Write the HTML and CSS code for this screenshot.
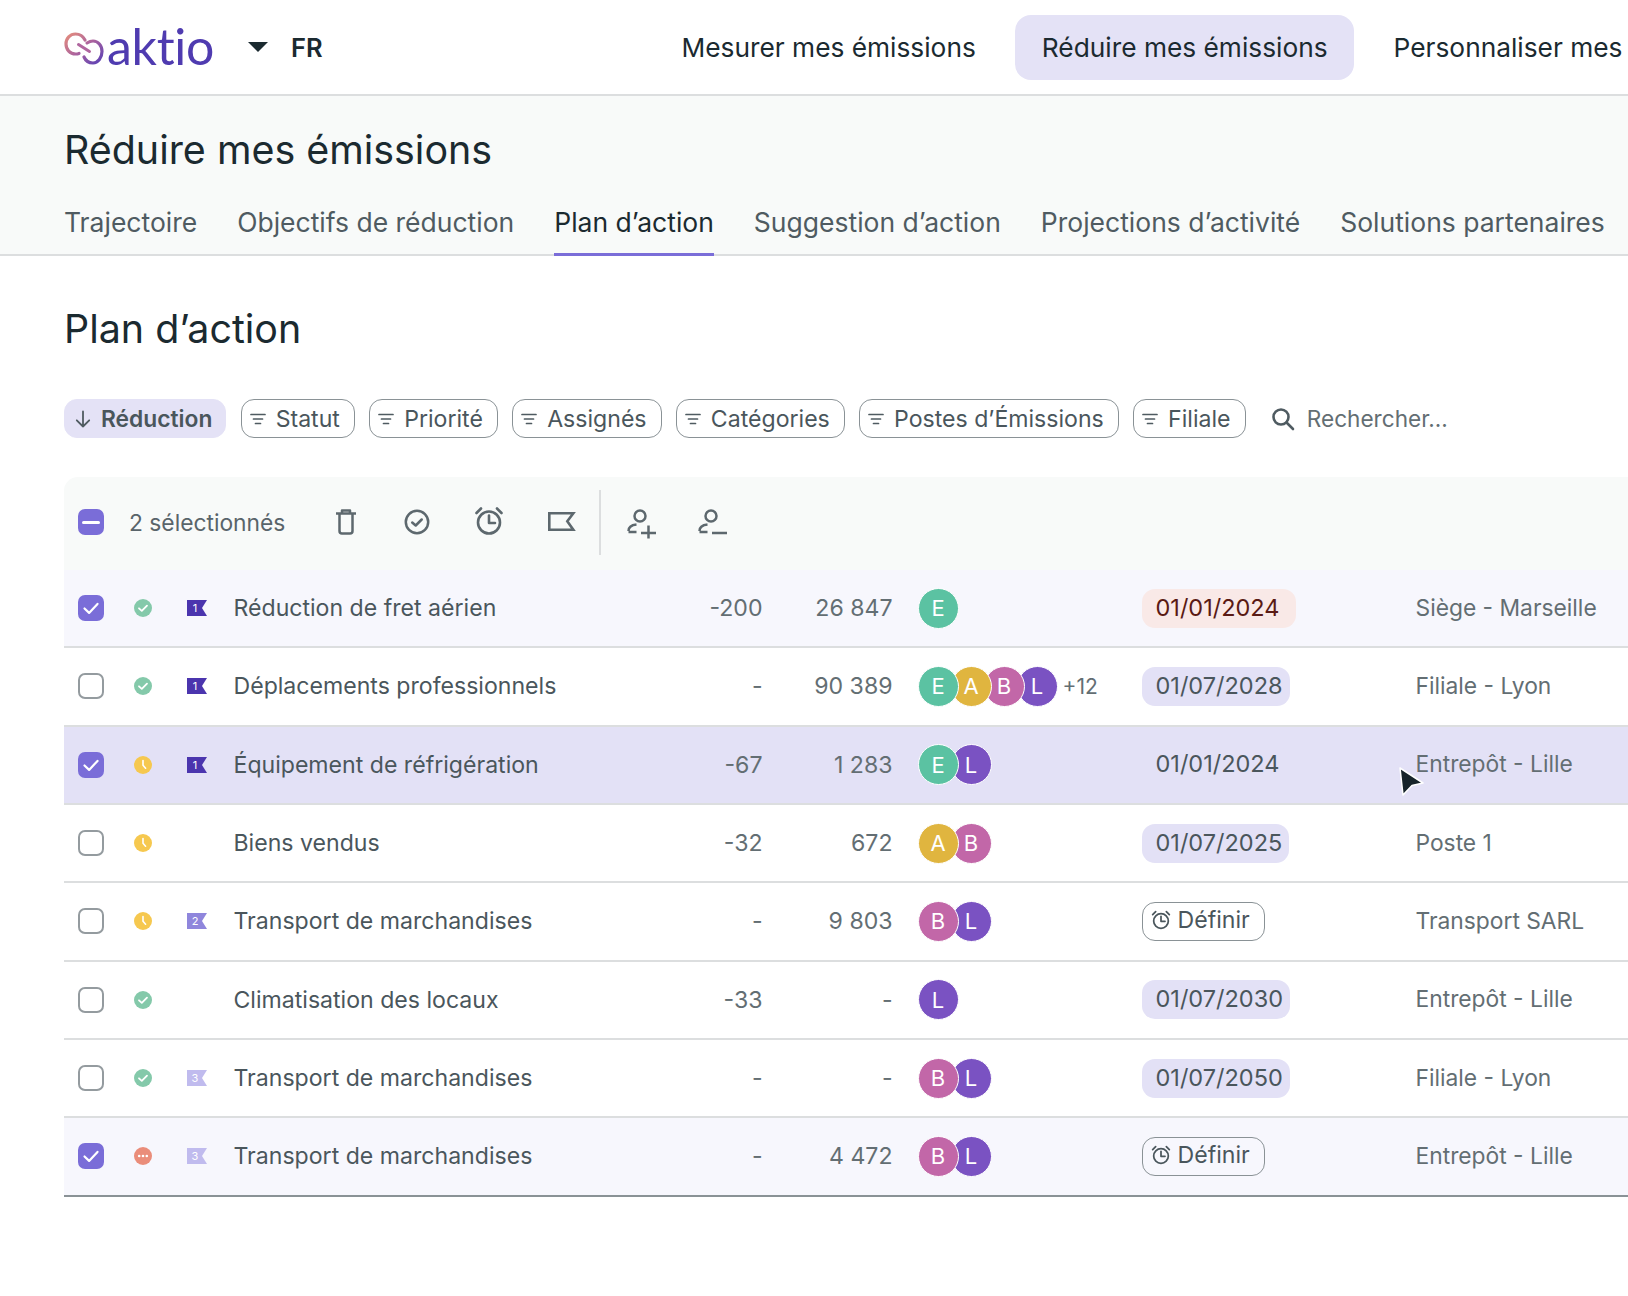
FILE: index.html
```html
<!DOCTYPE html>
<html lang="fr">
<head>
<meta charset="utf-8">
<title>Réduire mes émissions</title>
<link rel="stylesheet" href="styles.css">
</head>
<body>
<svg class="defs" width="0" height="0" aria-hidden="true">
  <defs>
    <symbol id="ok" viewBox="0 0 18 18"><circle cx="9" cy="9" r="9" fill="#84c9aa"/><path d="M5 9.300l2.800 2.600L13 6.600" fill="none" stroke="#fff" stroke-width="1.800" stroke-linecap="round" stroke-linejoin="round"/></symbol>
    <symbol id="wait" viewBox="0 0 18 18"><circle cx="9" cy="9" r="9" fill="#f6c84f"/><path d="M9 4.500v4.700l2.600 3" fill="none" stroke="#fff" stroke-width="1.600" stroke-linecap="round" stroke-linejoin="round"/></symbol>
    <symbol id="more" viewBox="0 0 18 18"><circle cx="9" cy="9" r="9" fill="#ea8d7a"/><circle cx="5.200" cy="9" r="1.300" fill="#fff"/><circle cx="9" cy="9" r="1.300" fill="#fff"/><circle cx="12.800" cy="9" r="1.300" fill="#fff"/></symbol>
    <symbol id="tick" viewBox="0 0 26 26"><path d="M6.500 13.500l4.600 4.400 8.400-9" fill="none" stroke="#fff" stroke-width="2.200" stroke-linecap="round" stroke-linejoin="round"/></symbol>
    <symbol id="funnel" viewBox="0 0 16 12"><path d="M1 1.500h14M3.500 6h9M5.500 10.500h5" fill="none" stroke="#4f5b61" stroke-width="1.700" stroke-linecap="round"/></symbol>
    <symbol id="alarm" viewBox="0 0 30 30"><circle cx="15" cy="16.500" r="11" fill="none" stroke="currentColor" stroke-width="2.600"/><path d="M15 9.500v7.500h6M2.500 7L7 2.500M27.500 7L23 2.500" fill="none" stroke="currentColor" stroke-width="2.600" stroke-linecap="round" stroke-linejoin="round"/></symbol>
  </defs>
</svg>

<header class="topbar">
  <div class="brand">
    <svg class="mark" viewBox="0 0 40 33" aria-hidden="true">
      <defs><linearGradient id="lg" x1="0" y1="0" x2="1" y2="1"><stop offset="0" stop-color="#e58d7d"/><stop offset=".5" stop-color="#a9629f"/><stop offset="1" stop-color="#5a40b5"/></linearGradient></defs>
      <path d="M21 8C19 4 15.500 2 11.500 2 6 2 2 6.500 2 12c0 5.500 4 10 9.500 10 1.200 0 2.400-.2 3.500-.6M23 11c2-1.300 4-2 6-2 5 0 9 4.500 9 10.500S34 31 29 31c-4 0-7.500-2.500-9-6" fill="none" stroke="url(#lg)" stroke-width="3.200" stroke-linecap="round"/>
      <path d="M14.500 12.500l11 7" fill="none" stroke="#b0669f" stroke-width="3" stroke-linecap="round"/>
    </svg>
    <span class="word">aktio</span>
    <span class="caret"></span>
    <span class="lang">FR</span>
  </div>
  <nav class="mainnav">
    <a class="navlink">Mesurer mes émissions</a>
    <a class="navlink current">Réduire mes émissions</a>
    <a class="navlink">Personnaliser mes</a>
  </nav>
</header>

<section class="subhead">
  <h1 class="pagetitle">Réduire mes émissions</h1>
  <nav class="tabs">
    <a class="tab">Trajectoire</a>
    <a class="tab">Objectifs de réduction</a>
    <a class="tab active">Plan d’action</a>
    <a class="tab">Suggestion d’action</a>
    <a class="tab">Projections d’activité</a>
    <a class="tab">Solutions partenaires</a>
  </nav>
</section>

<main class="content">
  <h2 class="sectiontitle">Plan d’action</h2>

  <div class="filters">
    <span class="chip sort"><svg class="ico-arrow" viewBox="0 0 16 18"><path d="M8 1.500v15M1.800 10.300L8 16.500l6.200-6.200" fill="none" stroke="#4f5b61" stroke-width="1.800" stroke-linecap="round" stroke-linejoin="round"/></svg>Réduction</span>
    <span class="chip"><svg class="ico-funnel"><use href="#funnel"/></svg>Statut</span>
    <span class="chip"><svg class="ico-funnel"><use href="#funnel"/></svg>Priorité</span>
    <span class="chip"><svg class="ico-funnel"><use href="#funnel"/></svg>Assignés</span>
    <span class="chip"><svg class="ico-funnel"><use href="#funnel"/></svg>Catégories</span>
    <span class="chip"><svg class="ico-funnel"><use href="#funnel"/></svg>Postes d’Émissions</span>
    <span class="chip"><svg class="ico-funnel"><use href="#funnel"/></svg>Filiale</span>
    <span class="search"><svg class="ico-search" viewBox="0 0 24 24"><circle cx="10" cy="10" r="7.500" fill="none" stroke="#4f5b61" stroke-width="2.600"/><path d="M15.500 15.500L22 22" stroke="#4f5b61" stroke-width="2.600" stroke-linecap="round"/></svg>Rechercher...</span>
  </div>

  <div class="table">
    <div class="toolbar">
      <span class="box on"><span class="dash"></span></span>
      <span class="count">2 sélectionnés</span>
      <div class="tools">
        <span class="tool"><svg viewBox="0 0 22 26" width="22" height="26"><path d="M1 4.500h20M7 4.500V1.500h8v3M4.500 4.500V22a2.500 2.500 0 0 0 2.500 2.500h8a2.500 2.500 0 0 0 2.500-2.500V4.500" fill="none" stroke="#5d686e" stroke-width="2.500" stroke-linejoin="round"/></svg></span>
        <span class="tool"><svg viewBox="0 0 26 26" width="26" height="26"><circle cx="13" cy="13" r="11.200" fill="none" stroke="#5d686e" stroke-width="2.500"/><path d="M8.200 13.500l3.500 3 6-6" fill="none" stroke="#5d686e" stroke-width="2.500" stroke-linecap="round" stroke-linejoin="round"/></svg></span>
        <span class="tool alarm-tool"><svg width="30" height="30"><use href="#alarm"/></svg></span>
        <span class="tool flag-tool"><svg viewBox="0 0 28 19" width="28" height="19"><path d="M1.300 1.300h24l-6 8 6 8.400h-24z" fill="none" stroke="#5d686e" stroke-width="2.600"/></svg></span>
      </div>
      <span class="divider"></span>
      <div class="tools">
        <span class="tool user-tool"><svg viewBox="0 0 30 30" width="30" height="30"><circle cx="13" cy="7" r="5.500" fill="none" stroke="#5d686e" stroke-width="2.500"/><path d="M1.500 22c0-3.500 3-6 8-6.500M1.500 23h8M14 24h15M21.500 16.500v13" fill="none" stroke="#5d686e" stroke-width="2.500"/></svg></span>
        <span class="tool user-tool"><svg viewBox="0 0 30 30" width="30" height="30"><circle cx="13" cy="7" r="5.500" fill="none" stroke="#5d686e" stroke-width="2.500"/><path d="M1.500 22c0-3.500 3-6 8-6.500M1.500 23h8M14 24h15" fill="none" stroke="#5d686e" stroke-width="2.500"/></svg></span>
      </div>
    </div>

    <div class="row selected">
      <span class="box on"><svg><use href="#tick"/></svg></span>
      <svg class="status"><use href="#ok"/></svg>
      <svg class="flag p1" viewBox="0 0 20 16"><path d="M0 0h20l-5 8 5 8H0z"/><text x="8" y="12" class="flagnum">1</text></svg>
      <span class="name">Réduction de fret aérien</span>
      <span class="num">-200</span><span class="num">26 847</span>
      <div class="people"><span class="av e">E</span></div>
      <div class="when"><span class="date late">01/01/2024</span></div>
      <span class="place">Siège - Marseille</span>
    </div>

    <div class="row">
      <span class="box"></span>
      <svg class="status"><use href="#ok"/></svg>
      <svg class="flag p1" viewBox="0 0 20 16"><path d="M0 0h20l-5 8 5 8H0z"/><text x="8" y="12" class="flagnum">1</text></svg>
      <span class="name">Déplacements professionnels</span>
      <span class="num">-</span><span class="num">90 389</span>
      <div class="people"><span class="av e">E</span><span class="av a">A</span><span class="av b">B</span><span class="av l">L</span><span class="extra">+12</span></div>
      <div class="when"><span class="date">01/07/2028</span></div>
      <span class="place">Filiale - Lyon</span>
    </div>

    <div class="row hovered">
      <span class="box on"><svg><use href="#tick"/></svg></span>
      <svg class="status"><use href="#wait"/></svg>
      <svg class="flag p1" viewBox="0 0 20 16"><path d="M0 0h20l-5 8 5 8H0z"/><text x="8" y="12" class="flagnum">1</text></svg>
      <span class="name">Équipement de réfrigération</span>
      <span class="num">-67</span><span class="num">1 283</span>
      <div class="people"><span class="av e">E</span><span class="av l">L</span></div>
      <div class="when"><span class="date">01/01/2024</span></div>
      <span class="place">Entrepôt - Lille</span>
      <svg class="cursor" viewBox="0 0 28 32"><path d="M2 2l23 15-11 2.500L5 29z" fill="#17242a" stroke="#fff" stroke-width="1.500" stroke-linejoin="round"/></svg>
    </div>

    <div class="row">
      <span class="box"></span>
      <svg class="status"><use href="#wait"/></svg>
      <span></span>
      <span class="name">Biens vendus</span>
      <span class="num">-32</span><span class="num">672</span>
      <div class="people"><span class="av a">A</span><span class="av b">B</span></div>
      <div class="when"><span class="date">01/07/2025</span></div>
      <span class="place">Poste 1</span>
    </div>

    <div class="row">
      <span class="box"></span>
      <svg class="status"><use href="#wait"/></svg>
      <svg class="flag p2" viewBox="0 0 20 16"><path d="M0 0h20l-5 8 5 8H0z"/><text x="8" y="12" class="flagnum">2</text></svg>
      <span class="name">Transport de marchandises</span>
      <span class="num">-</span><span class="num">9 803</span>
      <div class="people"><span class="av b">B</span><span class="av l">L</span></div>
      <div class="when"><span class="define"><svg class="ico-alarm"><use href="#alarm"/></svg>Définir</span></div>
      <span class="place">Transport SARL</span>
    </div>

    <div class="row">
      <span class="box"></span>
      <svg class="status"><use href="#ok"/></svg>
      <span></span>
      <span class="name">Climatisation des locaux</span>
      <span class="num">-33</span><span class="num">-</span>
      <div class="people"><span class="av l">L</span></div>
      <div class="when"><span class="date">01/07/2030</span></div>
      <span class="place">Entrepôt - Lille</span>
    </div>

    <div class="row">
      <span class="box"></span>
      <svg class="status"><use href="#ok"/></svg>
      <svg class="flag p3" viewBox="0 0 20 16"><path d="M0 0h20l-5 8 5 8H0z"/><text x="8" y="12" class="flagnum">3</text></svg>
      <span class="name">Transport de marchandises</span>
      <span class="num">-</span><span class="num">-</span>
      <div class="people"><span class="av b">B</span><span class="av l">L</span></div>
      <div class="when"><span class="date">01/07/2050</span></div>
      <span class="place">Filiale - Lyon</span>
    </div>

    <div class="row selected last">
      <span class="box on"><svg><use href="#tick"/></svg></span>
      <svg class="status"><use href="#more"/></svg>
      <svg class="flag p3" viewBox="0 0 20 16"><path d="M0 0h20l-5 8 5 8H0z"/><text x="8" y="12" class="flagnum">3</text></svg>
      <span class="name">Transport de marchandises</span>
      <span class="num">-</span><span class="num">4 472</span>
      <div class="people"><span class="av b">B</span><span class="av l">L</span></div>
      <div class="when"><span class="define"><svg class="ico-alarm"><use href="#alarm"/></svg>Définir</span></div>
      <span class="place">Entrepôt - Lille</span>
    </div>
  </div>
</main>
</body>
</html>
```

FILE: styles.css
```css
* { box-sizing: border-box; }
html, body { margin: 0; padding: 0; }
body {
  width: 1628px;
  height: 1296px;
  overflow: hidden;
  background: #fff;
  color: #1b2a30;
  font-family: Inter, "Liberation Sans", sans-serif;
}
.defs { position: absolute; }

/* top bar */
.topbar {
  height: 96px;
  border-bottom: 2px solid #dcdedf;
  display: flex;
  align-items: center;
  padding-left: 64px;
  white-space: nowrap;
}
.brand { display: flex; align-items: center; width: 591px; flex: none; }
.mark { width: 40px; height: 33px; margin-top: 2px; }
.word {
  font-family: Lato, sans-serif;
  font-weight: 400;
  font-size: 50px;
  line-height: 60px;
  letter-spacing: -.3px;
  color: #4f3bb0;
  margin-left: 3px;
  margin-top: -2px;
}
.caret {
  width: 0;
  height: 0;
  border-left: 10px solid transparent;
  border-right: 10px solid transparent;
  border-top: 10px solid #1b2a30;
  margin-left: 34px;
}
.lang { font-size: 25.500px; font-weight: 600; margin-left: 23px; }
.mainnav { display: flex; align-items: center; gap: 13px; }
.navlink {
  font-size: 26.300px;
  font-weight: 400;
  height: 65px;
  line-height: 65px;
  padding: 0 26.500px;
  border-radius: 16px;
  color: #1b2a30;
}
.navlink.current { background: #e4e2f6; }

/* sub header */
.subhead {
  height: 160px;
  background: #f8faf9;
  border-bottom: 2px solid #dcdedf;
  padding: 30px 0 0 64px;
  white-space: nowrap;
}
.pagetitle { margin: 0; font-size: 39.400px; line-height: 48px; font-weight: 400; }
.tabs { display: flex; gap: 40px; margin-top: 32px; }
.tab {
  font-size: 26.500px;
  line-height: 32px;
  height: 50px;
  font-weight: 400;
  color: #4f5b61;
}
.tab.active { color: #1b2a30; border-bottom: 3px solid #7a6dd8; }

/* content */
.content { padding: 0 0 0 64px; }
.sectiontitle { margin: 49px 0 0; font-size: 39.400px; line-height: 48px; font-weight: 400; }
.filters { display: flex; align-items: center; gap: 14.300px; margin-top: 46px; white-space: nowrap; }
.chip {
  display: inline-flex;
  align-items: center;
  height: 39px;
  padding: 0 14px 0 8px;
  border: 1.500px solid #8a9296;
  border-radius: 13px;
  font-size: 23.100px;
  color: #4a565c;
}
.chip.sort { background: #e4e2f6; border-color: #e4e2f6; font-weight: 600; font-size: 22.800px; padding-left: 10px; padding-right: 13px; }
.ico-arrow { width: 16px; height: 18px; margin-right: 10px; }
.ico-funnel { width: 16px; height: 12px; margin-right: 10px; }
.search { display: inline-flex; align-items: center; font-size: 22.600px; color: #636e73; margin-left: 11px; }
.ico-search { width: 24px; height: 24px; margin-right: 12px; }

/* table */
.table { margin-top: 39px; width: 1700px; }
.toolbar {
  height: 93px;
  background: #f8faf9;
  border-radius: 14px 0 0 0;
  display: flex;
  align-items: center;
  padding: 0 0 3px 14px;
  color: #4f5b61;
}
.count { font-size: 22.800px; margin-left: 25px; width: 181px; color: #59646a; }
.tools { display: flex; }
.tool { width: 71.500px; display: flex; justify-content: center; color: #5d686e; }
.alarm-tool svg { margin-top: -3px; }
.flag-tool { padding-left: 4px; }
.flag-tool svg { margin-top: 3px; }
.user-tool { padding-left: 6px; }
.user-tool svg { margin-top: 3px; }
.divider { width: 2px; height: 65px; background: #dcdedf; margin: 0 2px 0 3px; }

.box {
  width: 26px;
  height: 26px;
  border: 2px solid #949b9f;
  border-radius: 7px;
  background: #fff;
  display: flex;
  align-items: center;
  justify-content: center;
  flex: none;
}
.box.on { background: #7a6dd8; border-color: #7a6dd8; }
.box svg { width: 26px; height: 26px; flex: none; }
.dash { width: 18px; height: 3px; background: #fff; border-radius: 2px; }

.row {
  position: relative;
  height: 78.330px;
  border-bottom: 2px solid #dcdedf;
  display: grid;
  grid-template-columns: 55.500px 53px 47px 401px 128px 130px 249px 274px 1fr;
  align-items: center;
  padding-left: 14px;
  font-size: 23.100px;
  color: #4a565c;
  white-space: nowrap;
}
.row.selected { background: #f7f7fd; }
.row.hovered { background: #e3e1f6; }
.row.last { border-bottom-color: #8a9296; }
.status { width: 18px; height: 18px; }
.flag { width: 20px; height: 16px; }
.flag.p1 path { fill: #4b35ae; }
.flag.p2 path { fill: #8f86dc; }
.flag.p3 path { fill: #c0bbee; }
.flagnum { font-size: 11px; fill: #fff; text-anchor: middle; font-family: Inter, sans-serif; }
.num { text-align: right; color: #636e73; }
.people { display: flex; align-items: center; padding-left: 25px; }
.when { display: flex; align-items: center; }
.av {
  position: relative;
  width: 41px;
  height: 41px;
  margin-right: -8px;
  border-radius: 50%;
  border: 1.500px solid #fff;
  color: #fff;
  font-size: 22px;
  display: flex;
  align-items: center;
  justify-content: center;
  flex: none;
}
.av:nth-child(1) { z-index: 4; }
.av:nth-child(2) { z-index: 3; }
.av:nth-child(3) { z-index: 2; }
.av:nth-child(4) { z-index: 1; }
.av.e { background: #5bc2a2; }
.av.a { background: #e0b53f; }
.av.b { background: #c267a8; }
.av.l { background: #7a52c2; }
.extra { margin-left: 13px; font-size: 21px; color: #636e73; }
.date {
  display: inline-flex;
  align-items: center;
  height: 39px;
  padding: 0 7px 2px 14px;
  border-radius: 13px;
  background: #e3e1f6;
  font-size: 23.500px;
  color: #4a565c;
}
.date.late { background: #f9e9e7; color: #5a1a14; padding-right: 16px; }
.define {
  display: inline-flex;
  align-items: center;
  height: 39px;
  padding: 0 14px 2px 8px;
  border: 1.500px solid #8a9296;
  border-radius: 13px;
  color: #4a565c;
}
.ico-alarm { width: 20px; height: 20px; margin-right: 7px; color: #4a565c; }
.place { color: #636e73; font-size: 22.800px; margin-bottom: 2px; }
.cursor { position: absolute; left: 1334px; top: 39px; width: 28px; height: 32px; z-index: 5; }
```
